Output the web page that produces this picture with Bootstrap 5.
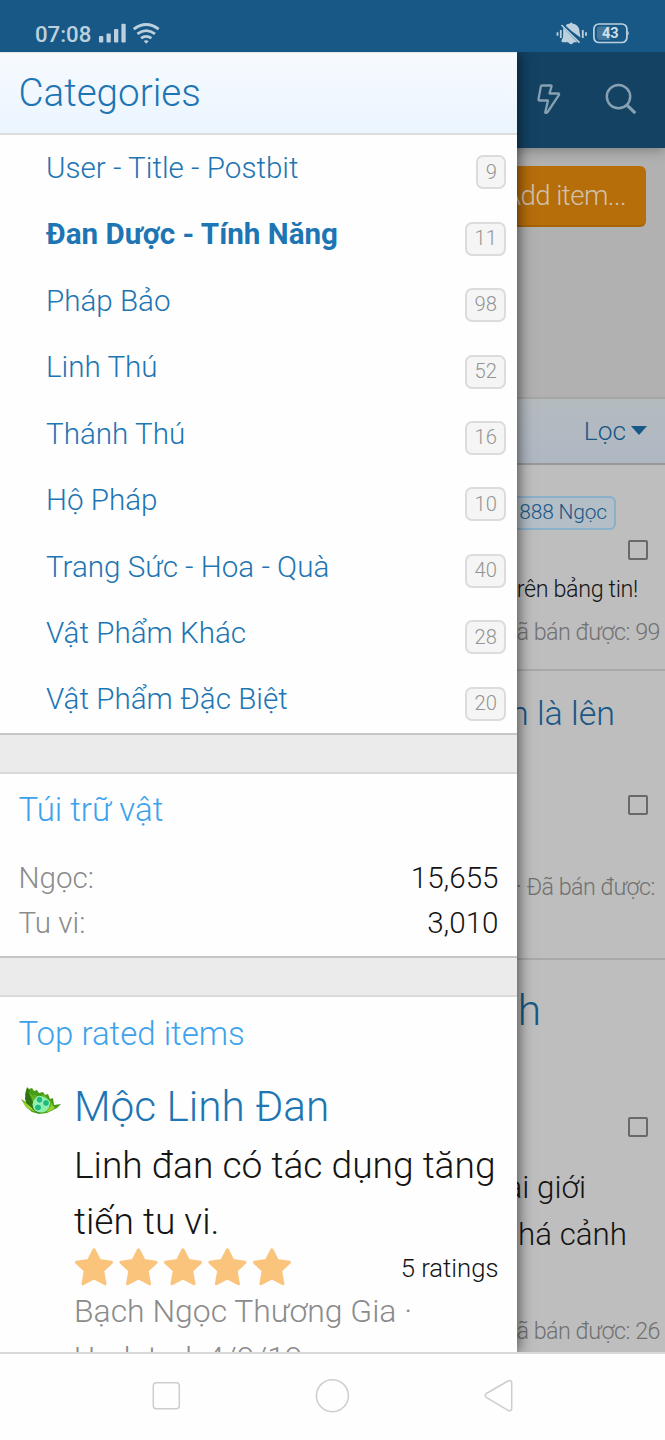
<!DOCTYPE html>
<html lang="vi">
<head>
<meta charset="utf-8">
<meta name="viewport" content="width=device-width, initial-scale=1">
<title>Categories</title>
<link href="https://cdn.jsdelivr.net/npm/bootstrap@5.3.0/dist/css/bootstrap.min.css" rel="stylesheet">
<style>
body{font-family:Roboto,"Noto Sans",sans-serif;font-weight:300;color:#141414;background:#fefefe;line-height:1;height:1440px;overflow:hidden}
.status{height:52px;background:#185886;color:#bcd0dd;padding:15px 36px 0 35px;font-size:22.2px;font-weight:500}
.status svg{display:block}
.stage{height:1300px}
.under{height:1300px;background:#bebebe}
.topbar{height:96px;background:#134263;box-shadow:0 2px 12px rgba(0,0,0,.3);padding-right:27px;z-index:1}
.hero{height:249px;background:#b1b1b1;padding:18px 19px 0 0}
.add-btn{height:61px;width:210px;background:#b66e0a;color:#cfc2b0;font-size:27.6px;letter-spacing:-.55px;font-weight:300;border-radius:6px;border:0;border-bottom:2px solid #a76306;padding:0 20px 0 0;text-align:right}
.filter{height:68px;background:linear-gradient(#b4bbbf,#afb7c3);border-top:2px solid #a6a6a6;border-bottom:2px solid #989898;color:#185886;font-size:26.3px;padding-right:18px}
.caret{width:0;height:0;border:8px solid transparent;border-top:9px solid #185886;border-bottom:0;margin:-2px 0 0 5px}
.entry{border-bottom:2px solid #a9a9a9;white-space:nowrap}
.ln{display:flex;align-items:center;justify-content:flex-end}
.price{height:34px;border:2px solid #8bb0c9;border-radius:6px;background:#b4bec7;color:#185886;font-size:21px;letter-spacing:-.2px;padding:0 7px 1px;display:flex;align-items:center}
.tick{width:20px;height:20px;border:2px solid #696969;border-radius:2px;margin-right:17px}
.dim{color:#717171;font-size:23.3px;letter-spacing:-.5px}
.lnk{color:#185886}
.drawer{left:0;top:0;width:517px;height:1300px;background:#ebebeb;overflow:hidden;z-index:2}
.drawer-shade{left:0;top:0;width:517px;height:1300px;box-shadow:1px 0 14px rgba(0,0,0,.65);z-index:2}
.panel{background:#fefefe;border-bottom:2px solid #c6c6c6}
.panel-title{height:83px;background:linear-gradient(#f6faff,#ebf5fe);border-bottom:2px solid #dcdcdc;border-top:1px solid #e2e6ea;color:#1d75b3;font-size:38.6px;padding:0 18.5px}
.cat{height:66.45px;padding:1px 11px 0 46px;color:#1d75b3;font-size:29.6px}
.cat b{font-weight:700}
.num{height:34px;border:2px solid #dcdcdc;border-radius:7px;background:#f5f5f5;color:#949494;font-size:20.2px;padding:0 7px 1px 7.4px;margin-top:7px;display:flex;align-items:center}
.gapbar{height:39px;border-bottom:2px solid #d9d9d9}
.sub{color:#3da2ec;font-size:33px}
.pair{height:44.5px;font-size:29.6px}
.mute{color:#8b8b8b}
.item-name{color:#1d75b3;font-size:42.3px}
.navi{height:88px;border-top:2px solid #d8d8d8;background:#fefefe}
</style>
<script src="https://cdn.jsdelivr.net/npm/bootstrap@5.3.0/dist/js/bootstrap.bundle.min.js"></script>
</head>
<body>
<header class="status d-flex align-items-start justify-content-between">
  <div class="d-flex align-items-start">
    <span style="margin-top:8px">07:08</span>
    <svg width="65" height="32" viewBox="0 0 65 32" style="margin-left:7px" fill="#bcd0dd"><rect x="1" y="21" width="4.3" height="6.5" rx="1"/><rect x="8.5" y="18.5" width="4.3" height="9" rx="1"/><rect x="16" y="14" width="4.3" height="13.5" rx="1"/><rect x="23.4" y="8.8" width="4.3" height="18.7" rx="1"/>
    <g fill="none" stroke="#bcd0dd" stroke-width="2.7"><path d="M35.7 14.2Q48.2 4.8 60.7 14.2M39.4 18.8Q48.2 12.3 57 18.8M43 23.2Q48.2 19.4 53.4 23.2"/></g><path d="M45.7 26.1Q48.2 24.3 50.7 26.1L48.2 28.7Z"/></svg>
  </div>
  <div class="d-flex align-items-start">
    <svg width="32" height="34" viewBox="0 0 32 34" style="margin-right:4px" fill="#bcd0dd"><path d="M9 11.5Q10.5 8.7 14 8.5Q15.2 6.7 16.5 8.5Q23.5 9.5 23.5 17L24.5 22.5Z"/><path d="M7.2 12.8L21.5 27.2H6.2Q4.5 26.4 7 22.5Z"/><path d="M12 27H18Q15 31.5 12 27Z"/><path d="M5.5 10L23.5 27.6" stroke="#bcd0dd" stroke-width="1.6"/><path d="M7.7 9.7L25.7 27" stroke="#185886" stroke-width="1.5"/><path d="M1.5 17.3v3.5M4.8 15v8M26.8 15v8M30 17.3v3.5" stroke="#bcd0dd" stroke-width="1.8"/></svg>
    <svg width="37" height="34" viewBox="0 0 37 34"><rect x="1.9" y="9" width="33" height="18.5" rx="5" fill="none" stroke="#bcd0dd" stroke-width="1.7"/><path d="M8 11.5H18V25H8Q5 25 5 22V14.5Q5 11.5 8 11.5Z" fill="#447799"/><path d="M35.4 15.5Q38 18.2 35.4 21Z" fill="#bcd0dd"/><text x="18.2" y="23.4" text-anchor="middle" font-size="14.5" font-weight="700" fill="#d0e0e9">43</text></svg>
  </div>
</header>

<div class="stage position-relative overflow-hidden">
  <main class="under">
    <div class="topbar position-relative d-flex align-items-center justify-content-end">
      <svg width="26" height="34" viewBox="0 0 26 34" fill="none" stroke="#87a0b2" stroke-width="2.3" stroke-linejoin="round" style="margin:-2px 42px 0 0"><path d="M6.2 3.5H14.8Q15.8 3.5 15.5 4.5L13.5 11.5H22.2Q23.5 11.5 23 12.8L11.6 30Q10.4 31.5 9.2 30.5L12 18.5H3.5Q2.3 18.5 2.5 17.2L4.8 4.6Q5 3.5 6.2 3.5Z"/></svg>
      <svg width="34" height="34" viewBox="0 0 34 34" fill="none" stroke="#87a0b2" stroke-width="2.5" style="margin-top:-2px"><circle cx="14.5" cy="14.6" r="11.7"/><path d="M22.5 22.7L31.3 31.2" stroke-width="3.2"/></svg>
    </div>
    <div class="hero d-flex justify-content-end"><button class="add-btn">Add item...</button></div>
    <div class="filter d-flex align-items-center justify-content-end"><span>Lọc</span><i class="caret"></i></div>
    <article class="entry" style="height:206px;padding-top:31px">
      <div class="ln" style="padding-right:49px"><span class="price">888 Ngọc</span></div>
      <div class="ln" style="height:40px"><span class="tick"></span></div>
      <div class="ln" style="height:39px;padding-right:27px;font-size:23.3px;letter-spacing:-.35px">trên bảng tin!</div>
      <div class="ln dim" style="height:47px;padding-right:5px">Đã bán được: 99</div>
    </article>
    <article class="entry" style="height:289px;padding-top:16px">
      <div class="ln lnk" style="height:52px;padding-right:50px;font-size:34px">n là lên</div>
      <div class="ln" style="height:132px"><span class="tick"></span></div>
      <div class="ln dim" style="height:33px;padding-right:10px">· Đã bán được:</div>
    </article>
    <article style="padding-top:21px;white-space:nowrap">
      <div class="ln lnk" style="height:60px;padding-right:124px;font-size:42.5px">Linh</div>
      <div class="ln" style="height:172px"><span class="tick"></span></div>
      <div class="ln" style="margin-top:-48px;height:46px;padding-right:79px;font-size:31.3px">loài giới</div>
      <div class="ln" style="height:48px;padding-right:38px;font-size:31.3px">phá cảnh</div>
      <div class="ln dim" style="margin-top:49px;height:48px;padding-right:5px">Đã bán được: 26</div>
    </article>
  </main>

  <div class="drawer-shade position-absolute"></div>
  <aside class="drawer position-absolute">
    <section class="panel">
      <h1 class="panel-title d-flex align-items-center m-0 fw-light">Categories</h1>
      <div class="cat d-flex align-items-center justify-content-between"><span>User - Title - Postbit</span><span class="num">9</span></div>
      <div class="cat d-flex align-items-center justify-content-between"><b>Đan Dược - Tính Năng</b><span class="num">11</span></div>
      <div class="cat d-flex align-items-center justify-content-between"><span>Pháp Bảo</span><span class="num">98</span></div>
      <div class="cat d-flex align-items-center justify-content-between"><span>Linh Thú</span><span class="num">52</span></div>
      <div class="cat d-flex align-items-center justify-content-between"><span>Thánh Thú</span><span class="num">16</span></div>
      <div class="cat d-flex align-items-center justify-content-between"><span>Hộ Pháp</span><span class="num">10</span></div>
      <div class="cat d-flex align-items-center justify-content-between"><span>Trang Sức - Hoa - Quà</span><span class="num">40</span></div>
      <div class="cat d-flex align-items-center justify-content-between"><span>Vật Phẩm Khác</span><span class="num">28</span></div>
      <div class="cat d-flex align-items-center justify-content-between"><span>Vật Phẩm Đặc Biệt</span><span class="num">20</span></div>
    </section>
    <div class="gapbar"></div>
    <section class="panel" style="height:184.5px;padding:0 18.5px 0 18.5px">
      <div class="sub d-flex align-items-center" style="height:72px">Túi trữ vật</div>
      <div class="pair d-flex align-items-center justify-content-between" style="margin-top:11px"><span class="mute">Ngọc:</span><span>15,655</span></div>
      <div class="pair d-flex align-items-center justify-content-between"><span class="mute">Tu vi:</span><span>3,010</span></div>
    </section>
    <div class="gapbar"></div>
    <section class="panel" style="padding:0 18.5px">
      <div class="sub d-flex align-items-center" style="height:72px">Top rated items</div>
      <div class="d-flex">
        <svg width="43" height="32" viewBox="0 0 43 32" style="margin:18px 12.5px 0 0" class="flex-shrink-0"><path d="M2 12L7 15L6 7L8 0L10 2L13 1L15 4L18 3L20 6L24 5L26 8L29 7L31 12L34 11L35 18L42 17L38 21L32 24L28 26L20 27L13 25L7 20Z" fill="#469b17"/><path d="M8 1L12 7L15 14L20 26L10 21L6 12Z" fill="#2f7410"/><path d="M9 4L17 12L14 7L20 10L25 7L30 13L32 19L28 24L24 26L15 17Z" fill="#5fb621"/><path d="M3 13L12 20L16 25L8 21ZM31 12L32 19L27 26L36 21L33 18Z" fill="#9ed32a"/><ellipse cx="22" cy="17.5" rx="8.5" ry="8" fill="#8ff0aa"/><g fill="#1fbd78" stroke="#a8f7cc" stroke-width="1"><circle cx="20.5" cy="12.8" r="3.5"/><circle cx="27" cy="16" r="3.5"/><circle cx="19" cy="20.5" r="3.6"/></g></svg>
        <div class="flex-grow-1 text-nowrap">
          <div class="item-name d-flex align-items-center" style="height:75px">Mộc Linh Đan</div>
          <div style="font-size:37.15px;line-height:55.3px;margin-top:-6px">Linh đan có tác dụng tăng<br>tiến tu vi.</div>
          <div class="d-flex align-items-center justify-content-between" style="height:40px;margin-top:-2px">
            <svg width="222" height="40" viewBox="0 0 222 40"><defs><path id="st" d="M20 2.8L25.5 13.5L37.5 15.3L28.7 23.7L31 36.8L20 30.9L9 36.8L11.3 23.7L2.5 15.3L14.5 13.5Z" fill="#fac47c" stroke="#fac47c" stroke-width="3" stroke-linejoin="round"/></defs><use href="#st"/><use href="#st" x="44.5"/><use href="#st" x="89"/><use href="#st" x="133.4"/><use href="#st" x="177.9"/></svg>
            <span style="font-size:25.7px;padding:3px 0 0 0">5 ratings</span>
          </div>
          <div class="mute" style="font-size:31.9px;line-height:46.6px;margin-top:1px">Bạch Ngọc Thương Gia ·<br>Updated: 4/9/19</div>
        </div>
      </div>
    </section>
  </aside>
</div>

<nav class="navi">
  <svg width="665" height="86" viewBox="0 0 665 86" fill="none" stroke="#cdcdcd" stroke-width="1.5"><rect x="153.3" y="28.8" width="26" height="26" rx="3"/><circle cx="332.4" cy="41.7" r="16"/><path d="M486.3 39.5L508 27Q511.7 25.5 511.7 29V54.5Q511.7 58 508 56.3L486.3 43.5Q484 41.5 486.3 39.5Z"/></svg>
</nav>
</body>
</html>
